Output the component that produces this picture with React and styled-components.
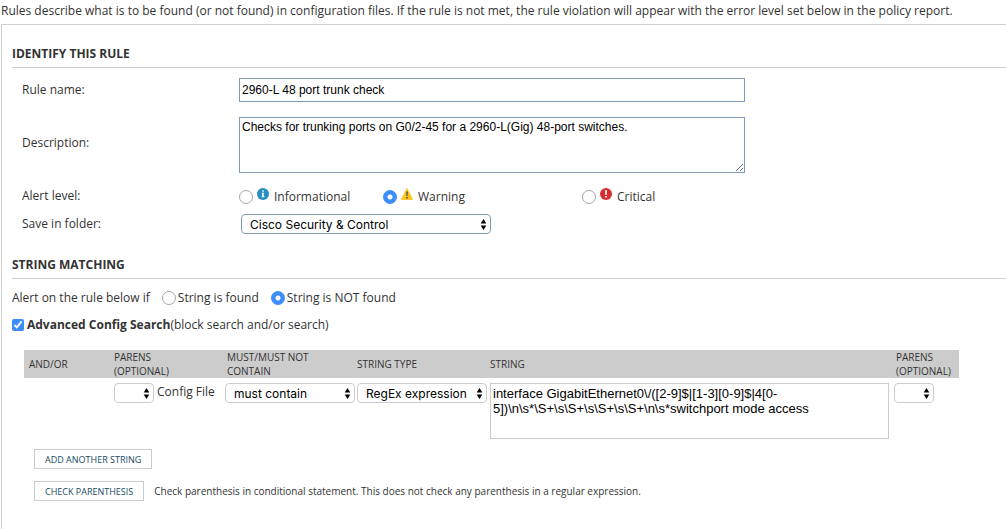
import * as React from "react";
import styled, { createGlobalStyle, css } from "styled-components";

const Line = "#d0d0d0";
const FieldLine = "#7f9db9";
const Accent = "#3a8dfb";

const GlobalStyle = createGlobalStyle`
  * {
    box-sizing: border-box;
  }
  body {
    margin: 0;
    background: white;
    color: #333;
    font: 12px/16px "Open Sans", sans-serif;
    overflow-x: hidden;
  }
`;

const Intro = styled.p`
  margin: 0;
  padding: 3px 1px 5px;
`;

const Panel = styled.form`
  margin: 0 -1px 0 1px;
  min-height: calc(100vh - 24px);
  padding: 21px 0 28px 10px;
  border: 1px solid ${Line};
  border-bottom: none;
`;

const Title = styled.h2`
  margin: 0;
  padding-bottom: 5px;
  border-bottom: 1px solid ${Line};
  font-size: 12px;
  line-height: 16px;
  font-weight: 700;
  text-transform: uppercase;
`;

const Fields = styled.div`
  display: grid;
  grid-template-columns: 217px minmax(0, 506px);
  align-items: center;
  padding: 10px 0 15px 10px;
`;

const Row = styled.div`
  display: flex;
  align-items: center;
  align-self: ${props => (props.$top ? "start" : "auto")};
  min-height: ${props => props.$height}px;
`;

const fieldStyle = css`
  display: block;
  width: 100%;
  margin: 0;
  border: 1px solid ${FieldLine};
  border-radius: 0;
  outline: none;
  background: white;
  color: black;
  font-family: "Liberation Sans", sans-serif;
`;

const TextInput = styled.input`
  ${fieldStyle}
  height: 24px;
  padding: 0 2px;
  font-size: 12px;
`;

const TextArea = styled.textarea`
  ${fieldStyle}
  height: 56px;
  padding: 2px;
  border-color: ${props => (props.$plain ? "#ccc" : FieldLine)};
  font-size: ${props => (props.$plain ? 13 : 12)}px;
  line-height: ${props => (props.$plain ? 15 : 14)}px;
  resize: ${props => (props.$plain ? "none" : "vertical")};
`;

const Radio = styled.input.attrs({ type: "radio" })`
  appearance: none;
  flex: none;
  width: 14px;
  height: 14px;
  margin: 0;
  border: 1px solid #a6a6a6;
  border-radius: 50%;
  background: white;

  &:checked {
    border-color: ${Accent};
    background: radial-gradient(circle, white 2px, ${Accent} 3px);
  }
`;

const CheckBox = styled.input.attrs({ type: "checkbox" })`
  width: 12px;
  height: 12px;
  margin: 0 3px 0 0;
  accent-color: ${Accent};
`;

const Levels = styled.div`
  display: grid;
  grid-template-columns: 144px 199px auto;
`;

const LevelLabel = styled.label`
  display: flex;
  align-items: center;
  gap: 4px;

  svg {
    flex: none;
    margin-bottom: 6px;
  }
  span {
    padding-left: 1px;
  }
`;

const Option = styled.label`
  display: flex;
  align-items: center;
  gap: 2px;
  margin-left: 12px;
`;

const SelectBox = styled.span`
  position: relative;
  display: inline-block;
  flex: none;
  width: ${props => props.$width}px;
  max-width: 100%;
  margin-left: ${props => (props.$inset ? 2 : 0)}px;
  vertical-align: top;

  select {
    appearance: none;
    display: block;
    width: 100%;
    height: 20px;
    margin: 0;
    padding: 0 12px 0 8px;
    border: 1px solid ${props => (props.$inset ? FieldLine : "#ccc")};
    border-radius: 4px;
    background: white;
    color: black;
    font: 12px Inter, sans-serif;
  }
  svg {
    position: absolute;
    right: 4px;
    top: 5px;
    pointer-events: none;
  }
`;

const StringsWrap = styled.div`
  padding: 17px 47px 0 12px;
`;

const Strings = styled.table`
  width: 100%;
  table-layout: fixed;
  border-collapse: collapse;

  th {
    height: 28px;
    padding: 0 2px;
    background: #ccc;
    font-size: 10px;
    line-height: 14px;
    font-weight: normal;
    text-align: left;
    text-transform: uppercase;
  }
  th:first-child {
    padding-left: 5px;
  }
`;

const Cell = styled.td`
  padding: 5px 0 0 ${props => (props.$flush ? 0 : 2)}px;
  vertical-align: top;
  white-space: nowrap;
`;

const StringCell = styled(Cell)`
  padding-right: 5px;
`;

const FileLabel = styled.span`
  display: inline-block;
  padding: 1px 0 0 3px;
`;

const Actions = styled.div`
  display: flex;
  flex-direction: column;
  gap: 12px;
  padding: 10px 0 0 22px;
`;

const Action = styled.div`
  display: flex;
  align-items: center;
  gap: 10px;
  font-size: 10px;
`;

const Button = styled.button`
  height: 20px;
  padding: 0 10px;
  border: 1px solid #ccc;
  background: white;
  color: #204a63;
  font: 9px "Open Sans", sans-serif;
  text-transform: uppercase;
  white-space: nowrap;
  cursor: pointer;
`;

const InfoIcon = () => (
  <svg width="12" height="12" viewBox="0 0 12 12" aria-hidden="true">
    <circle cx="6" cy="6" r="6" fill="#278ec4" />
    <path d="M5.2 2.3h1.6v1.5H5.2zM4.6 4.8h2.2v3.4h.7v1H4.6v-1h.6V5.8h-.6z" fill="#fff" />
  </svg>
);

const WarningIcon = () => (
  <svg width="12" height="12" viewBox="0 0 12 12" aria-hidden="true">
    <path d="M6 .6 11.6 11.5H.4z" fill="#fcc418" stroke="#fcc418" strokeWidth=".8" strokeLinejoin="round" />
    <path d="M5.2 3.6h1.6L6.5 8h-1zM5.2 8.9h1.6v1.5H5.2z" fill="#4d4d4d" />
  </svg>
);

const CriticalIcon = () => (
  <svg width="12" height="12" viewBox="0 0 12 12" aria-hidden="true">
    <circle cx="6" cy="6" r="6" fill="#d92c2f" />
    <path d="M5 2.2h2L6.7 7H5.3zM5.1 8h1.8v1.6H5.1z" fill="#fff" />
  </svg>
);

const Select = ({ options, ...props }) => (
  <SelectBox $width={props.width} $inset={props.inset}>
    <select id={props.id} aria-label={props.label}>
      {options.map(value => (
        <option key={value}>{value}</option>
      ))}
    </select>
    <svg width="7" height="11" viewBox="0 0 7 11" aria-hidden="true">
      <path d="M3.5 0 6.3 4.5H.7zM3.5 11 .7 6.5h5.6z" />
    </svg>
  </SelectBox>
);

const levels = [
  { name: "Informational", icon: <InfoIcon /> },
  { name: "Warning", icon: <WarningIcon /> },
  { name: "Critical", icon: <CriticalIcon /> },
];

const App = () => {
  const [level, setLevel] = React.useState("Warning");
  const [found, setFound] = React.useState(false);

  return (
    <>
      <GlobalStyle />
      <Intro>
        Rules describe what is to be found (or not found) in configuration files. If the rule is not met, the rule
        violation will appear with the error level set below in the policy report.
      </Intro>
      <Panel onSubmit={e => e.preventDefault()}>
        <Title>Identify this rule</Title>
        <Fields>
          <Row $height={24}>
            <label htmlFor="name">Rule name:</label>
          </Row>
          <TextInput id="name" defaultValue="2960-L 48 port trunk check" />
          {/* the rows are 86px high because of the description, its label sits a bit above the middle */}
          <Row $height={82} $top>
            <label htmlFor="description">Description:</label>
          </Row>
          <Row $height={86}>
            <TextArea
              id="description"
              defaultValue="Checks for trunking ports on G0/2-45 for a 2960-L(Gig) 48-port switches."
            />
          </Row>
          <Row $height={16} $top id="level">Alert level:</Row>
          <Levels role="radiogroup" aria-labelledby="level">
            {levels.map(({ name, icon }) => (
              <LevelLabel key={name}>
                <Radio name="level" checked={level === name} onChange={() => setLevel(name)} />
                {icon}
                <span>{name}</span>
              </LevelLabel>
            ))}
          </Levels>
          <Row $height={36}>
            <label htmlFor="folder">Save in folder:</label>
          </Row>
          <Select id="folder" width={250} inset options={["Cisco Security & Control"]} />
        </Fields>

        <Title>String matching</Title>
        <Row $height={38} role="radiogroup" aria-labelledby="match">
          <span id="match">Alert on the rule below if</span>
          <Option>
            <Radio name="found" checked={found} onChange={() => setFound(true)} />
            String is found
          </Option>
          <Option>
            <Radio name="found" checked={!found} onChange={() => setFound(false)} />
            String is NOT found
          </Option>
        </Row>
        <Row $height={16}>
          <CheckBox id="advanced" defaultChecked />
          <label htmlFor="advanced">
            <b>Advanced Config Search</b>(block search and/or search)
          </label>
        </Row>

        <StringsWrap>
          <Strings>
            <colgroup>
              <col width="88" />
              <col width="113" />
              <col width="130" />
              <col width="133" />
              <col />
              <col width="65" />
            </colgroup>
            <thead>
              <tr>
                <th>And/Or</th>
                <th>Parens<br />(optional)</th>
                <th>Must/Must not<br />contain</th>
                <th>String type</th>
                <th>String</th>
                <th>Parens<br />(optional)</th>
              </tr>
            </thead>
            <tbody>
              <tr>
                <Cell />
                <Cell>
                  <Select label="Opening parens" width={40} options={["", "("]} />
                  <FileLabel>Config File</FileLabel>
                </Cell>
                <Cell $flush>
                  <Select label="Must or must not contain" width={130} options={["must contain", "must not contain"]} />
                </Cell>
                <Cell>
                  <Select label="String type" width={130} options={["RegEx expression", "Find string"]} />
                </Cell>
                <StringCell>
                  <TextArea
                    $plain
                    aria-label="String"
                    defaultValue={
                      "interface GigabitEthernet0\\/([2-9]$|[1-3][0-9]$|4[0-5])\\n\\s*\\S+\\s\\S+\\s\\S+\\s\\S+\\n\\s*switchport mode access"
                    }
                  />
                </StringCell>
                <Cell $flush>
                  <Select label="Closing parens" width={40} options={["", ")"]} />
                </Cell>
              </tr>
            </tbody>
          </Strings>
        </StringsWrap>

        <Actions>
          <Action>
            <Button type="button">Add another string</Button>
          </Action>
          <Action>
            <Button type="button">Check parenthesis</Button>
            <span>Check parenthesis in conditional statement. This does not check any parenthesis in a regular expression.</span>
          </Action>
        </Actions>
      </Panel>
    </>
  );
};

export default App;
